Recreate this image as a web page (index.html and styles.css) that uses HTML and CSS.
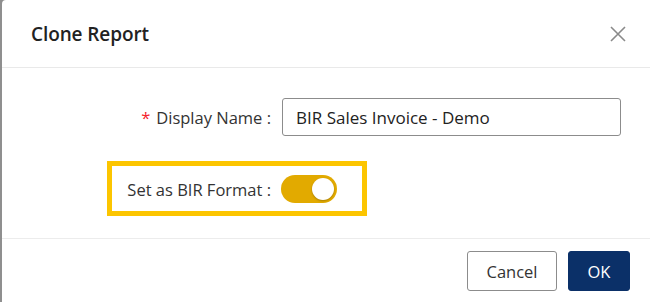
FILE: index.html
```html
<!DOCTYPE html>
<html>
<head>
<meta charset="utf-8">
<link rel="stylesheet" href="styles.css">
</head>
<body>
<div class="modal">
  <div class="modal-header">
    <div class="title">Clone Report</div>
    <button class="close" aria-label="Close">
      <svg width="16" height="16" viewBox="0 0 16 16"><path d="M1 1 L15 15 M15 1 L1 15" stroke="#8a8a8a" stroke-width="1.6" fill="none"/></svg>
    </button>
  </div>
  <div class="modal-body">
    <div class="row row-name">
      <label class="label"><span class="req">*</span>Display Name :</label>
      <div class="input">BIR Sales Invoice - Demo</div>
    </div>
    <div class="row row-bir">
      <div class="highlight"></div>
      <label class="label">Set as BIR Format :</label>
      <div class="switch"><span class="knob"></span></div>
    </div>
  </div>
  <div class="modal-footer">
    <button class="btn btn-cancel">Cancel</button>
    <button class="btn btn-ok">OK</button>
  </div>
</div>
</body>
</html>
```
FILE: styles.css
```css
html, body {
  margin: 0;
  padding: 0;
  width: 650px;
  height: 302px;
  overflow: hidden;
  background: #8f8f8f;
  font-family: "Open Sans", "Noto Sans", sans-serif;
}
.modal {
  margin-left: 2px;
  height: 302px;
  background: #fff;
  border-top-left-radius: 4px;
  display: flex;
  flex-direction: column;
}
.modal-header {
  height: 68px;
  border-bottom: 1px solid #e9e9e9;
  display: flex;
  align-items: center;
  justify-content: space-between;
  padding: 0 24px 0 29px;
  box-sizing: border-box;
  flex: none;
}
.title {
  font-size: 19px;
  font-weight: 600;
  color: #222;
  letter-spacing: -0.1px;
}
.close {
  border: 0;
  background: none;
  padding: 0;
  width: 16px;
  height: 16px;
  display: flex;
}
.modal-body {
  height: 171px;
  border-bottom: 1px solid #ececec;
  box-sizing: border-box;
  padding-top: 30px;
  flex: none;
}
.row {
  display: flex;
  align-items: center;
}
.label {
  width: 269px;
  text-align: right;
  font-size: 16.5px;
  color: #333;
  flex: none;
}
.req {
  color: #f5222d;
  margin-right: 6px;
}
.input {
  margin-left: 11px;
  width: 339px;
  height: 38px;
  box-sizing: border-box;
  border: 1px solid #8c8c8c;
  border-radius: 3px;
  padding: 0 13px;
  display: flex;
  align-items: center;
  font-size: 17px;
  color: #222;
}
.row-bir {
  position: relative;
  margin-top: 39px;
  height: 28px;
}
.highlight {
  position: absolute;
  left: 105px;
  top: -14px;
  width: 260px;
  height: 55px;
  box-sizing: border-box;
  border: 5px solid #fcc500;
}
.switch {
  margin-left: 10px;
  width: 56px;
  height: 28px;
  border-radius: 14px;
  background: #e2aa00;
  position: relative;
  flex: none;
}
.knob {
  position: absolute;
  right: 3px;
  top: 3px;
  width: 22px;
  height: 22px;
  border-radius: 50%;
  background: #fff;
  box-shadow: 0 1px 2px rgba(0,0,0,0.25);
}
.modal-footer {
  display: flex;
  justify-content: flex-end;
  gap: 11px;
  padding: 12px 20px 0 0;
}
.btn {
  height: 40px;
  border-radius: 3px;
  font-family: inherit;
  font-size: 16.5px;
  cursor: pointer;
}
.btn-cancel {
  width: 90px;
  background: #fff;
  border: 1px solid #8c8c8c;
  color: #333;
}
.btn-ok {
  width: 62px;
  background: #0b3068;
  border: 1px solid #0b3068;
  color: #fff;
}
```
